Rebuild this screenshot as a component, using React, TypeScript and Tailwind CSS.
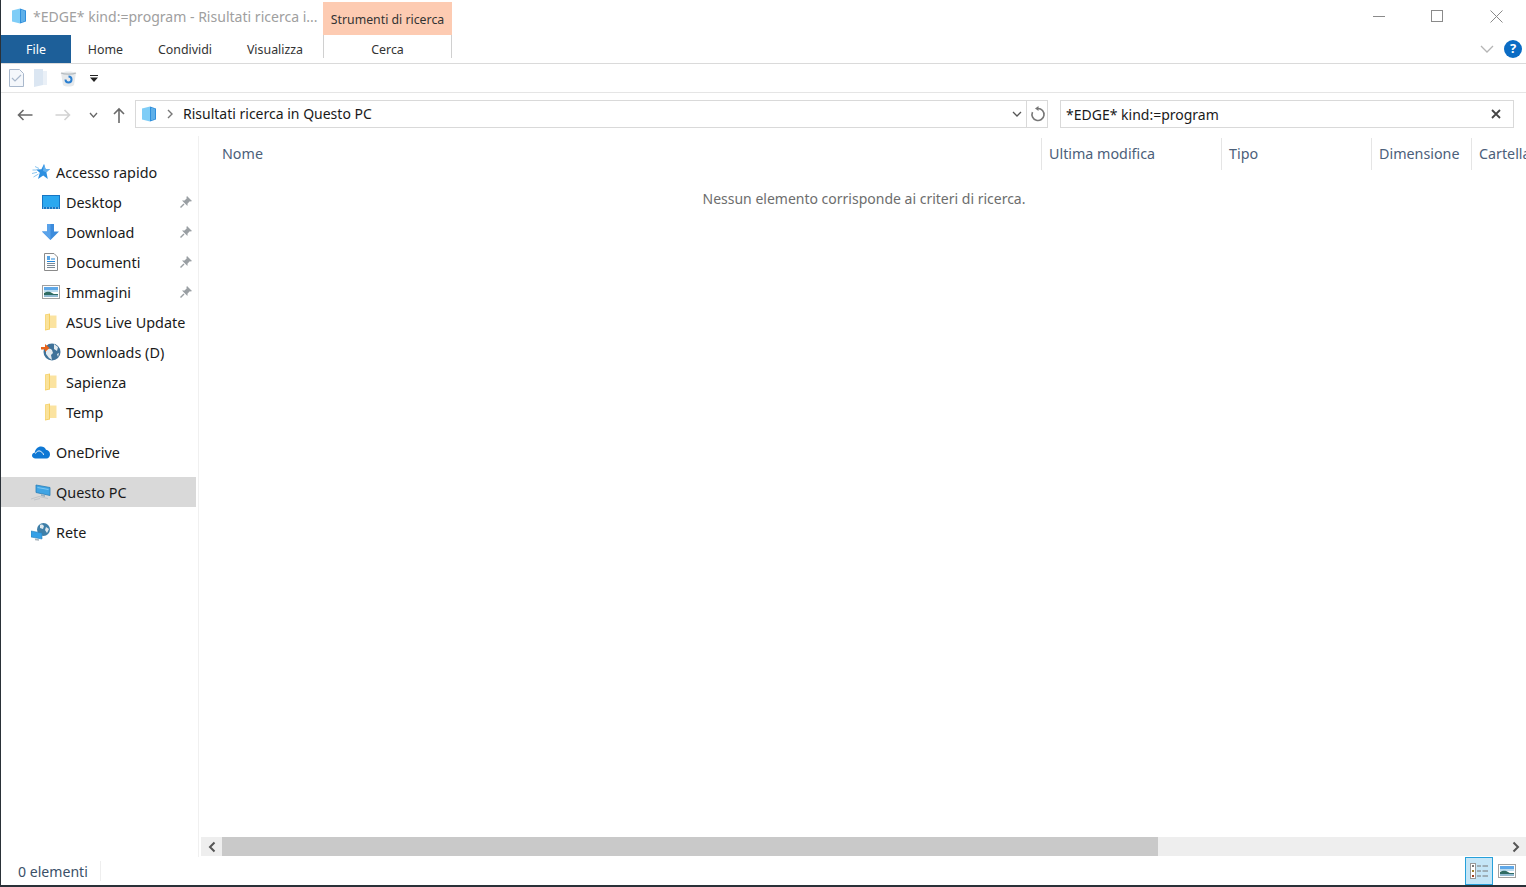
const FONT = "font-['Noto_Sans','Open_Sans',sans-serif]";

const SearchCube = ({ size = 16 }: { size?: number }) => (
  <svg width={size} height={size} viewBox="0 0 16 16">
    <path d="M1 2.500L9 .5v15l-8-2z" fill="#7fcdf7" />
    <path d="M9 .5l6 2v11l-6 2z" fill="#2f8fdc" />
    <path d="M11 2v12M13 2.600v10.800" stroke="#8fd0f5" strokeWidth="1" />
  </svg>
);

const Pin = () => (
  <svg width="14" height="14" viewBox="0 0 14 14">
    <path d="M8 1l5 5-1.200.6-1-.4L8.600 8.400 8.400 11 3 5.600l2.600-.2 2.200-2.200-.4-1z" fill="#9a9fa3" />
    <path d="M5 9l-3.500 3.500" stroke="#9a9fa3" strokeWidth="1.400" />
  </svg>
);

const Folder = () => (
  <svg width="13" height="18" viewBox="0 0 13 18">
    <path d="M1 1.500L6 .5v16l-5 1z" fill="#f5cf62" />
    <path d="M6 2.500h6.500V15H6z" fill="#fbe3a0" />
    <path d="M1.500 2L5 1.300v14.500l-3.500.6z" fill="#fae29a" />
  </svg>
);

const Desktop = () => (
  <svg width="18" height="14" viewBox="0 0 18 14">
    <rect x="0" y="0" width="18" height="14" fill="#1676c4" />
    <rect x="1" y="1" width="16" height="11" fill="#2ba8f0" />
    <path d="M1 13h16" stroke="#d8eefc" strokeWidth="1" strokeDasharray="1 2" />
  </svg>
);

const DownloadArrow = () => (
  <svg width="17" height="16" viewBox="0 0 17 16">
    <path d="M5 0h7v7.500h5L8.500 16 0 7.500h5z" fill="#3c8bdc" />
    <path d="M5 0h3.500v16L0 7.500h5z" fill="#5aa3ea" />
  </svg>
);

const Doc = () => (
  <svg width="14" height="18" viewBox="0 0 14 18">
    <path d="M.5.500h9.500l3.500 3.500v13.500H.5z" fill="#fdfdfd" stroke="#8a8a8a" />
    <path d="M3 4h3M3 6h3" stroke="#1f86dc" strokeWidth="1.400" />
    <path d="M7 6h4M3 8.500h8" stroke="#1f86dc" strokeWidth="1" />
    <path d="M3 10.500h8M3 12.500h8M3 14.500h8" stroke="#7c8a96" strokeWidth="1" />
  </svg>
);

const Picture = () => (
  <svg width="18" height="14" viewBox="0 0 18 14">
    <rect x=".5" y=".5" width="17" height="13" fill="#fff" stroke="#a0a0a0" />
    <rect x="2" y="2" width="14" height="4" fill="#5fa8e8" />
    <rect x="2" y="5" width="14" height="2" fill="#bcdcf0" />
    <path d="M2 8c3-2 6-1.500 8 0s4 1 6 1v3H2z" fill="#2f6b62" />
    <rect x="2" y="10" width="14" height="2" fill="#8fb8cf" />
  </svg>
);

const Globe = () => (
  <svg width="20" height="18" viewBox="0 0 20 18">
    <circle cx="11" cy="9" r="8.500" fill="#3f7299" />
    <path d="M5 7c2-2 5-1 6 0l1 3-2 2 1 5-3-2-3-4zM13 1l4 3-1 4-3-2zM16 11l2-1-1 4z" fill="#e4ebef" />
    <path d="M0 4h4V1l4.500 4L4 9V6.500H0z" fill="#e8641c" />
  </svg>
);

const Star = () => (
  <svg width="18" height="16" viewBox="0 0 18 16">
    <path d="M12 0l1.600 5H18l-3.600 3.200 1.400 6.800-4.600-3.400L6 15l1.800-6.200L4 5.500l5.400-.3z" fill="#2d8fe0" />
    <path d="M12 0l1.600 5H18l-3.600 3.200L11 7z" fill="#62b0ee" />
    <path d="M3 2.500l4 2M.5 6h4M0 9.500l5-1.200M1.500 13l5-3" stroke="#8cc6ef" strokeWidth="1" />
  </svg>
);

const Cloud = () => (
  <svg width="18" height="13" viewBox="0 0 18 13">
    <path d="M3.500 12.500C1.500 12.500 0 11.300 0 9.600S1.200 7 2.700 6.800C3.100 3 6 .5 9 .5c2.300 0 4 1.200 5 3.200 2.400 0 4 2.200 4 4.600s-1.500 4.200-3.500 4.200z" fill="#0f78d4" />
    <path d="M3.500 7.500c1-2.500 4-3.500 6-1.500 1.500 1 2 2 2 3" stroke="#fff" strokeWidth="1" fill="none" />
  </svg>
);

const Pc = () => (
  <svg width="20" height="18" viewBox="0 0 20 18">
    <path d="M5 2l14 2.500v8L5 9.500z" fill="#3fa4e4" stroke="#2a7fb8" strokeWidth=".8" />
    <path d="M6.500 4l11 2v1L6.500 5z" fill="#80c8f2" />
    <path d="M10 11l4 1v2l-4-1z" fill="#9ab2c2" />
    <path d="M0 16l8-2.500 9 2M3 17l6-1.500" stroke="#c0c5c9" strokeWidth="1" fill="none" />
  </svg>
);

const Network = () => (
  <svg width="20" height="18" viewBox="0 0 20 18">
    <circle cx="12.500" cy="6.500" r="6.500" fill="#3f7fa8" />
    <path d="M9 2c2-1 3 0 4 1l-1 3-3-1zM15 4l3 2-2 4-2-3z" fill="#e0e9ee" />
    <path d="M0 8l11 2v6L0 14z" fill="#36a0e6" stroke="#2a7fb8" strokeWidth=".6" />
    <path d="M4 15.500l4 .8v1.500l-4-.6z" fill="#a8b4bc" />
  </svg>
);

const Chevron = ({ color = "#666", w = 10, h = 6 }: { color?: string; w?: number; h?: number }) => (
  <svg width={w} height={h} viewBox={`0 0 ${w} ${h}`}>
    <path d={`M1 1L${w / 2} ${h - 1}L${w - 1} 1`} stroke={color} strokeWidth="1.300" fill="none" />
  </svg>
);

const NavArrow = ({ color, rotate }: { color: string; rotate?: boolean }) => (
  <svg width="16" height="12" viewBox="0 0 16 12" className={rotate ? "rotate-180" : ""}>
    <path d="M15.500 6H1.500M6.500 1l-5 5 5 5" stroke={color} strokeWidth="1.600" fill="none" />
  </svg>
);

const navTop = [
  { label: "Desktop", icon: <Desktop />, pinned: true },
  { label: "Download", icon: <DownloadArrow />, pinned: true },
  { label: "Documenti", icon: <Doc />, pinned: true },
  { label: "Immagini", icon: <Picture />, pinned: true },
  { label: "ASUS Live Update", icon: <Folder /> },
  { label: "Downloads (D)", icon: <Globe /> },
  { label: "Sapienza", icon: <Folder /> },
  { label: "Temp", icon: <Folder /> },
];

const columns = [
  { label: "Ultima modifica", width: "w-[180px]" },
  { label: "Tipo", width: "w-[150px]" },
  { label: "Dimensione", width: "w-[100px]" },
  { label: "Cartella", width: "w-[60px]" },
];

function NavRow(props: { label: string; icon: React.ReactNode; pinned?: boolean; child?: boolean; active?: boolean }) {
  const { label, icon, pinned, child, active } = props;
  return (
    <div className={`flex h-[30px] w-[195px] items-center ${child ? "pl-[39px]" : "pl-[29px]"} ${active ? "bg-[#d9d9d9]" : ""}`}>
      <span className="flex w-[21px] shrink-0 justify-center">{icon}</span>
      <span className="ml-[5px] whitespace-nowrap pt-[2px] text-[14.400px] text-[#1a1a1a]">{label}</span>
      {pinned && (
        <span className="ml-auto mr-[3px] flex">
          <Pin />
        </span>
      )}
    </div>
  );
}

export default function App() {
  return (
    <div className={`${FONT} flex h-[887px] w-[1526px] flex-col overflow-hidden border-b-2 border-l border-[#2a3138] bg-white`}>
      {/* title bar */}
      <div className="flex h-[35px] shrink-0 items-center">
        <span className="ml-[10px] mb-[3px] flex">
          <SearchCube />
        </span>
        <span className="ml-[6px] w-[290px] whitespace-nowrap pb-[2px] text-[14.050px] text-[#a0a0a0]">
          *EDGE* kind:=program - Risultati ricerca i...
        </span>
        <div className="mt-[2px] flex h-[33px] w-[129px] items-center justify-center self-start bg-[#fdcbb2] pt-[3px] text-[12.300px] text-[#333]">
          Strumenti di ricerca
        </div>
        <div className="ml-auto flex items-center pb-[3px] pr-[23px]">
          <span className="h-px w-[12px] bg-[#8a8a8a]" />
          <span className="ml-[46px] h-[12px] w-[12px] border border-[#8a8a8a]" />
          <svg className="ml-[47px]" width="13" height="13" viewBox="0 0 13 13">
            <path d="M.5.500l12 12M12.500.500l-12 12" stroke="#8a8a8a" strokeWidth="1" />
          </svg>
        </div>
      </div>

      {/* ribbon tabs */}
      <div className="flex h-[29px] shrink-0 border-b border-[#dadada] text-[12.400px] text-[#333]">
        <div className="flex w-[70px] items-center justify-center bg-[#1d5f99] pt-[2px] text-white">File</div>
        <div className="flex w-[69px] items-center justify-center pt-[2px]">Home</div>
        <div className="flex w-[90px] items-center justify-center pt-[2px]">Condividi</div>
        <div className="flex w-[90px] items-center justify-center pt-[2px]">Visualizza</div>
        <div className="ml-[3px] h-[23px] w-[129px] border-x border-[#d0d0d0] pt-[6px] text-center">Cerca</div>
        <div className="ml-auto flex items-center pr-[4px]">
          <Chevron color="#b5b5b5" w={14} h={8} />
          <span className="ml-[10px] flex h-[18px] w-[18px] items-center justify-center rounded-full bg-[#0b6cc4] text-[13px] font-bold text-white">?</span>
        </div>
      </div>

      {/* quick access */}
      <div className="flex h-[29px] shrink-0 items-center border-b border-[#e5e5e5] pl-[8px]">
        <svg width="15" height="18" viewBox="0 0 15 18">
          <path d="M.5.500h10l4 4v13H.5z" fill="#f4f7fb" stroke="#a9b8cc" />
          <path d="M3 9l3 3 6-6" stroke="#a9b8cc" strokeWidth="1.200" fill="none" />
        </svg>
        <svg className="ml-[10px]" width="13" height="18" viewBox="0 0 13 18">
          <path d="M0 0h9v16l-9 2z" fill="#dbe6f2" />
          <path d="M9 2h4v14H9z" fill="#eaf0f7" />
        </svg>
        <svg className="ml-[13px]" width="17" height="18" viewBox="0 0 17 18">
          <path d="M1 4c2-2 13-2 15 0l-2 12c-2 2-9 2-11 0z" fill="#e6e9eb" />
          <path d="M1 4c3 1.500 12 1.500 15 0" stroke="#b5bbbf" strokeWidth="1.200" fill="none" />
          <path d="M8.500 7.500a3 3 0 1 1-3 3" stroke="#2b7fd0" strokeWidth="2" fill="none" />
        </svg>
        <svg className="ml-[13px]" width="8" height="7" viewBox="0 0 8 7">
          <path d="M0 0h8v1H0zM0 2.500h8L4 7z" fill="#222" />
        </svg>
      </div>

      {/* address row */}
      <div className="flex h-[43px] shrink-0 items-start pt-[7px]">
        <div className="flex h-[28px] w-[134px] items-center pt-[2px]">
          <span className="ml-[16px] flex">
            <NavArrow color="#6a6a6a" />
          </span>
          <span className="ml-[22px] flex">
            <NavArrow color="#d2d2d2" rotate />
          </span>
          <span className="ml-[18px] flex">
            <Chevron w={9} />
          </span>
          <svg className="ml-[15px]" width="12" height="16" viewBox="0 0 12 16">
            <path d="M6 16V2M1 7l5-5 5 5" stroke="#6a6a6a" strokeWidth="1.600" fill="none" />
          </svg>
        </div>
        <div className="flex h-[28px] w-[913px] items-center border border-[#d9d9d9]">
          <span className="ml-[5px] flex">
            <SearchCube />
          </span>
          <svg className="ml-[10px]" width="6" height="10" viewBox="0 0 6 10">
            <path d="M1 1l4 4-4 4" stroke="#777" strokeWidth="1.400" fill="none" />
          </svg>
          <span className="ml-[10px] whitespace-nowrap pb-[2px] text-[14px] text-[#1a1a1a]">Risultati ricerca in Questo PC</span>
          <span className="ml-auto flex">
            <Chevron color="#555" />
          </span>
          <span className="ml-[4px] h-full w-px bg-[#d9d9d9]" />
          <svg className="ml-[3px] mr-px" width="16" height="16" viewBox="0 0 16 16">
            <path d="M8 2.500a6 6 0 1 1-5.500 3.600" stroke="#777" strokeWidth="1.600" fill="none" />
            <path d="M8.500 0v5L5 2.500z" fill="#777" />
          </svg>
        </div>
        <div className="ml-[12px] flex h-[28px] w-[454px] items-center border border-[#d9d9d9] pl-[5px] pr-[12px]">
          <span className="whitespace-nowrap pt-px text-[14px] text-[#1a1a1a]">*EDGE* kind:=program</span>
          <svg className="ml-auto" width="10" height="10" viewBox="0 0 10 10">
            <path d="M1 1l8 8M9 1l-8 8" stroke="#444" strokeWidth="1.800" />
          </svg>
        </div>
      </div>

      {/* body */}
      <div className="flex min-h-0 flex-1">
        <nav className="w-[198px] shrink-0 border-r border-[#f0f0f0] pt-[21px]">
          <NavRow label="Accesso rapido" icon={<Star />} />
          {navTop.map((item) => (
            <NavRow key={item.label} label={item.label} icon={item.icon} pinned={item.pinned} child />
          ))}
          <div className="mt-[10px]">
            <NavRow label="OneDrive" icon={<Cloud />} />
          </div>
          <div className="mt-[10px]">
            <NavRow label="Questo PC" icon={<Pc />} active />
          </div>
          <div className="mt-[10px]">
            <NavRow label="Rete" icon={<Network />} />
          </div>
        </nav>

        <main className="flex min-w-0 flex-1 flex-col">
          <div className="mt-[2px] flex h-[32px] shrink-0 items-center overflow-hidden text-[14.300px] text-[#4c607a]">
            <div className="w-[842px] shrink-0 pl-[23px]">Nome</div>
            {columns.map((col) => (
              <div key={col.label} className={`${col.width} flex h-full shrink-0 items-center border-l border-[#e5e5e5] pl-[7px] whitespace-nowrap`}>
                {col.label}
              </div>
            ))}
          </div>
          <div className="flex-1 pt-[18px] pl-[3px] text-center text-[14px] text-[#6d6d6d]">
            Nessun elemento corrisponde ai criteri di ricerca.
          </div>
          <div className="mb-px ml-[2px] flex h-[19px] shrink-0 bg-[#eeeeee]">
            <div className="flex w-[21px] items-center justify-center">
              <svg width="8" height="12" viewBox="0 0 8 12">
                <path d="M6.500 1.500L2 6l4.500 4.500" stroke="#555" strokeWidth="2" fill="none" />
              </svg>
            </div>
            <div className="w-[936px] bg-[#c9c9c9]" />
            <div className="ml-auto flex w-[21px] items-center justify-center">
              <svg width="8" height="12" viewBox="0 0 8 12">
                <path d="M1.500 1.500L6 6l-4.500 4.500" stroke="#555" strokeWidth="2" fill="none" />
              </svg>
            </div>
          </div>
        </main>
      </div>

      {/* status bar */}
      <div className="flex h-[28px] shrink-0 items-center">
        <div className="flex h-[20px] w-[100px] items-center border-r border-[#eeeeee] pl-[17px] pt-[2px] text-[14.100px] text-[#3a5068]">0 elementi</div>
        <div className="ml-auto flex h-full items-center pr-[10px]">
          <div className="flex h-[28px] w-[28px] items-center justify-center border border-[#26a0da] bg-[#c5e6f7]">
            <svg width="18" height="16" viewBox="0 0 18 16">
              <rect x=".5" y=".5" width="5" height="15" fill="#fff" stroke="#999" />
              <rect x="2" y="2" width="2" height="2" fill="#777" />
              <rect x="2" y="7" width="2" height="2" fill="#a08030" />
              <rect x="2" y="12" width="2" height="2" fill="#a04020" />
              <path d="M7 3h4M12.500 3H18M7 8h4M12.500 8H18M7 13h4M12.500 13H18" stroke="#777" strokeWidth="1" />
            </svg>
          </div>
          <span className="ml-[5px] flex">
            <Picture />
          </span>
        </div>
      </div>
    </div>
  );
}
